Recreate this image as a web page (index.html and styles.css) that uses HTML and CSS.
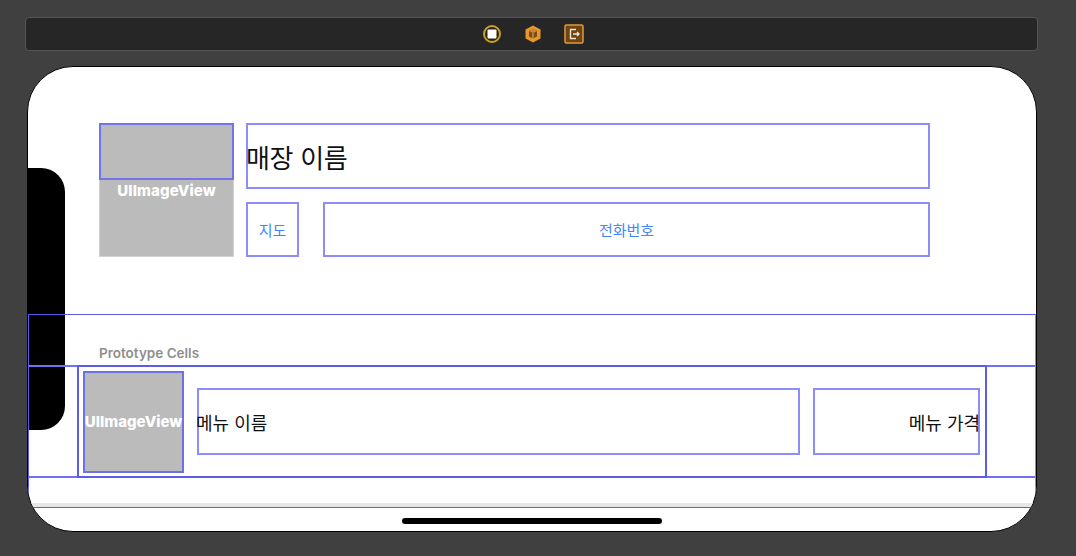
FILE: index.html
```html
<!DOCTYPE html>
<html lang="ko">
<head>
<meta charset="utf-8">
<link rel="stylesheet" href="styles.css">
</head>
<body>
<div class="toolbar">
  <div class="tb-icons">
    <svg class="tb-icon" viewBox="0 0 20 20" width="20" height="20">
      <circle cx="10" cy="10" r="8" fill="#2a2410" stroke="#c9a02a" stroke-width="2"/>
      <rect x="5.5" y="5.5" width="9" height="9" rx="1" fill="#fff"/>
    </svg>
    <svg class="tb-icon" viewBox="0 0 20 20" width="20" height="20">
      <polygon points="10,1.5 17.5,5.5 17.5,14.5 10,18.5 2.5,14.5 2.5,5.5" fill="#e9962f"/>
      <polygon points="10,5 14,7 14,12.5 10,14.5 6,12.5 6,7" fill="#7a4c16"/>
      <polygon points="10,5 14,7 10,9 6,7" fill="#c98a3a"/>
      <line x1="10" y1="9" x2="10" y2="14.5" stroke="#e9b06a" stroke-width="1"/>
    </svg>
    <svg class="tb-icon" viewBox="0 0 20 20" width="20" height="20">
      <rect x="1" y="1" width="18" height="18" rx="1.5" fill="#6e4415" stroke="#e29a3a" stroke-width="1.5"/>
      <path d="M12 5.5 H6.5 V14.5 H12" fill="none" stroke="#f2e4cf" stroke-width="1.4"/>
      <path d="M9 10 H15 M13 8 L15 10 L13 12" fill="none" stroke="#f2e4cf" stroke-width="1.3"/>
    </svg>
  </div>
</div>

<div class="phone">
  <div class="notch"></div>

  <div class="header">
    <div class="image-view">
      <div class="image-top"></div>
      <span class="iv-label">UIImageView</span>
    </div>
    <div class="header-right">
      <div class="title-box"><span class="title-text">매장 이름</span></div>
      <div class="btn-row">
        <div class="btn btn-map">지도</div>
        <div class="btn btn-phone">전화번호</div>
      </div>
    </div>
  </div>

  <div class="table">
    <div class="section-head"><span class="proto">Prototype Cells</span></div>
    <div class="cell">
      <div class="content">
        <div class="cell-image"><span class="iv-label cell-iv">UIImageView</span></div>
        <div class="name-box"><span class="name-text">메뉴 이름</span></div>
        <div class="price-box"><span class="price-text">메뉴 가격</span></div>
      </div>
    </div>
    <div class="table-foot"></div>
  </div>

  <div class="home-indicator"></div>
</div>
</body>
</html>
```

FILE: styles.css
```css
* { box-sizing: border-box; }

html, body {
  margin: 0;
  padding: 0;
}

body {
  width: 1076px;
  height: 556px;
  background: #404040;
  overflow: hidden;
  font-family: "Noto Sans CJK KR", "Noto Sans", sans-serif;
}

.toolbar {
  margin: 17px 0 0 25px;
  width: 1013px;
  height: 34px;
  background: #262626;
  border: 1px solid #555;
  border-radius: 4px;
  display: flex;
  align-items: center;
  justify-content: center;
}

.tb-icons {
  display: flex;
  gap: 21px;
  margin-left: 3px;
}

.tb-icon { display: block; }

.phone {
  position: relative;
  margin: 15px 0 0 27px;
  width: 1010px;
  height: 466px;
  background: #fff;
  border: 1px solid #000;
  border-radius: 46px;
  overflow: hidden;
  display: flex;
  flex-direction: column;
}

.notch {
  position: absolute;
  left: 0;
  top: 101px;
  width: 37px;
  height: 262px;
  background: #000;
  border-radius: 0 24px 24px 0;
}

.header {
  display: flex;
  gap: 12px;
  margin: 56px 0 0 71px;
}

.image-view {
  position: relative;
  width: 135px;
  height: 134px;
  background: #bbbbbb;
  border: 1px solid #d2d2d2;
  display: flex;
  align-items: center;
  justify-content: center;
}

.image-top {
  position: absolute;
  left: -1px;
  top: -1px;
  width: 135px;
  height: 57px;
  border: 2px solid #7474ea;
}

.iv-label {
  color: #fff;
  font-family: "Inter", "Liberation Sans", sans-serif;
  font-weight: 800;
  font-size: 15px;
  letter-spacing: 0.1px;
  position: relative;
}

.header-right {
  display: flex;
  flex-direction: column;
  gap: 13px;
  width: 684px;
}

.title-box {
  height: 66px;
  border: 2px solid #8c8cfb;
  display: flex;
  align-items: center;
  font-size: 26px;
  color: #111;
}

.title-text {
  margin-left: -2px;
  letter-spacing: -0.3px;
}

.btn-row {
  display: flex;
  gap: 24px;
}

.btn {
  height: 55px;
  border: 2px solid #8c8cfb;
  display: flex;
  align-items: center;
  justify-content: center;
  font-size: 15px;
  color: #3f86ff;
}

.btn-map { width: 53px; }
.btn-phone { flex: 1; }

.table {
  position: relative;
  margin-top: 57px;
  width: 1008px;
  height: 194px;
  border: 1px solid #5b5bf0;
  border-right-color: #8a8af8;
  display: flex;
  flex-direction: column;
}

.section-head {
  height: 52px;
  border-bottom: 2px solid #7070f2;
  padding: 27px 0 0 70px;
  line-height: 18px;
}

.proto {
  font-family: "Inter", "Liberation Sans", sans-serif;
  font-size: 13.5px;
  font-weight: 600;
  color: #8e8e8e;
}

.cell {
  height: 111px;
  border-bottom: 2px solid #7070f2;
  padding-left: 48px;
}

.content {
  width: 910px;
  height: 113px;
  margin-top: -2px;
  border: 2px solid #5c5cea;
  display: flex;
  align-items: center;
  padding-left: 4px;
  gap: 13px;
}

.cell-image {
  width: 101px;
  height: 102px;
  background: #bbbbbb;
  border: 2px solid #6f6fe6;
  display: flex;
  align-items: center;
  justify-content: center;
}

.cell-iv {
  font-size: 15px;
  letter-spacing: 0;
  white-space: nowrap;
}

.name-box {
  width: 603px;
  height: 67px;
  border: 2px solid #8c8cfb;
  display: flex;
  align-items: center;
  font-size: 18px;
  color: #111;
}

.name-text { margin-left: -3px; }

.price-box {
  width: 167px;
  height: 67px;
  border: 2px solid #8c8cfb;
  display: flex;
  align-items: center;
  justify-content: flex-end;
  font-size: 18px;
  color: #111;
  white-space: nowrap;
}

.price-text { margin-right: -2px; }

.table-foot {
  flex: 1;
  border-bottom: 4px solid #e6e6e6;
}

.home-indicator {
  position: absolute;
  left: 374px;
  top: 451px;
  width: 260px;
  height: 6px;
  border-radius: 3px;
  background: #000;
}
```
